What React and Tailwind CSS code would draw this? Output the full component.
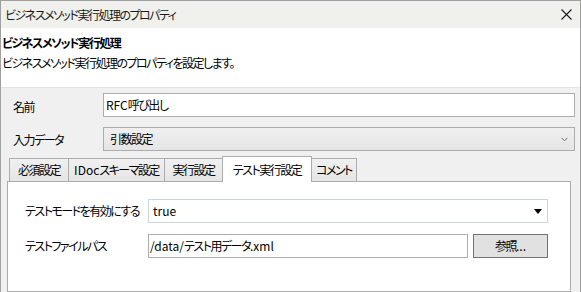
import React from "react";

const font = "[font-family:'Noto_Sans_CJK_JP','Noto_Sans',sans-serif] [font-feature-settings:'palt'] tracking-[-1.5px]";

function L({ children }) {
  return <span className="tracking-normal">{children}</span>;
}

function Tab({ label, active, first, w }) {
  if (active) {
    return (
      <div className={"relative z-10 -mb-px -ml-px flex h-[26px] items-center justify-center border border-b-0 border-[#acacac] bg-white text-[12px] text-black " + w}>
        {label}
      </div>
    );
  }
  return (
    <div
      className={
        "flex h-[23px] items-center justify-center border border-b-0 border-[#acacac] bg-gradient-to-b from-[#f0f0f0] to-[#e5e5e5] text-[12px] text-black " +
        w +
        (first ? "" : " -ml-px")
      }
    >
      {label}
    </div>
  );
}

export default function App() {
  return (
    <div
      className={
        "flex h-[292px] w-[581px] flex-col overflow-hidden border border-b-0 border-[#a0a0a0] bg-[#f0f0f0] text-black " +
        font
      }
    >
      {/* title bar */}
      <div className="flex h-[27px] shrink-0 items-center justify-between bg-[#f0f0ec] pl-[4px] pr-[8px]">
        <span className="text-[12px] leading-none text-[#1a1a1a]">ビジネスメソッド実行処理のプロパティ</span>
        <svg width="11" height="11" viewBox="0 0 11 11" className="mb-[1px]">
          <path d="M0.5 0.5 L10.5 10.5 M10.5 0.5 L0.5 10.5" stroke="#1a1a1a" strokeWidth="1.1" fill="none" />
        </svg>
      </div>

      {/* header */}
      <div className="flex h-[60px] shrink-0 flex-col border-b border-[#e3e3e3] bg-white pl-[1px] pt-[6px]">
        <div className="text-[12px] font-bold leading-[18px]">ビジネスメソッド実行処理</div>
        <div className="mt-[2px] text-[12px] leading-[18px]">ビジネスメソッド実行処理のプロパティを設定します。</div>
      </div>

      {/* body */}
      <div className="flex flex-1 flex-col pr-[5px]">
        <div className="mt-[5px] flex items-center pl-[12px]">
          <div className="mt-[3px] w-[90px] text-[12px]">名前</div>
          <div className="flex h-[24px] flex-1 items-center border border-[#adadad] bg-white pl-[2px] text-[12px]">
            <L>RFC</L>呼び出し
          </div>
        </div>
        <div className="mt-[10px] flex items-center pl-[12px]">
          <div className="mt-[2px] w-[90px] text-[12px]">入力データ</div>
          <div className="flex h-[24px] flex-1 items-center justify-between border border-[#acacac] bg-gradient-to-b from-[#f0f0f0] to-[#e5e5e5] pl-[6px] pr-[6px] text-[12px]">
            <span>引数設定</span>
            <svg width="7" height="5" viewBox="0 0 7 5">
              <path d="M0.5 0.8 L3.5 3.8 L6.5 0.8" stroke="#6d6d6d" strokeWidth="1" fill="none" />
            </svg>
          </div>
        </div>

        {/* tabs */}
        <div className="mt-[5px] flex items-end pl-[8px]">
          <Tab label="必須設定" first w="w-[60px]" />
          <Tab label={<><L>IDoc</L>スキーマ設定</>} w="w-[97px]" />
          <Tab label="実行設定" w="w-[59px]" />
          <Tab label="テスト実行設定" active w="w-[90px]" />
          <Tab label="コメント" w="w-[46px]" />
        </div>
        <div className="ml-[6px] mr-[4px] flex flex-1 flex-col border border-[#acacac] bg-white pl-[17px] pt-[17px]">
          <div className="flex items-center">
            <div className="w-[123px] whitespace-nowrap text-[12px]">テストモードを有効にする</div>
            <div className="flex h-[24px] w-[400px] items-center justify-between border border-[#cbd2dc] bg-white pl-[4px] pr-[5px] text-[12px]">
              <L>true</L>
              <svg width="8" height="5" viewBox="0 0 8 5">
                <path d="M0 0 L8 0 L4 5 Z" fill="#000" />
              </svg>
            </div>
          </div>
          <div className="mt-[11px] flex items-center">
            <div className="w-[123px] whitespace-nowrap text-[12px]">テストファイルパス</div>
            <div className="flex h-[24px] w-[320px] items-center border border-[#adadad] bg-white pl-[1px] text-[12px]">
              <L>/data/</L>テスト用データ<L>.xml</L>
            </div>
            <div className="ml-[5px] flex h-[24px] w-[75px] items-center justify-center border border-[#707070] bg-[#e1e1e1] text-[12px]">
              参照<L>...</L>
            </div>
          </div>
        </div>
      </div>
    </div>
  );
}
